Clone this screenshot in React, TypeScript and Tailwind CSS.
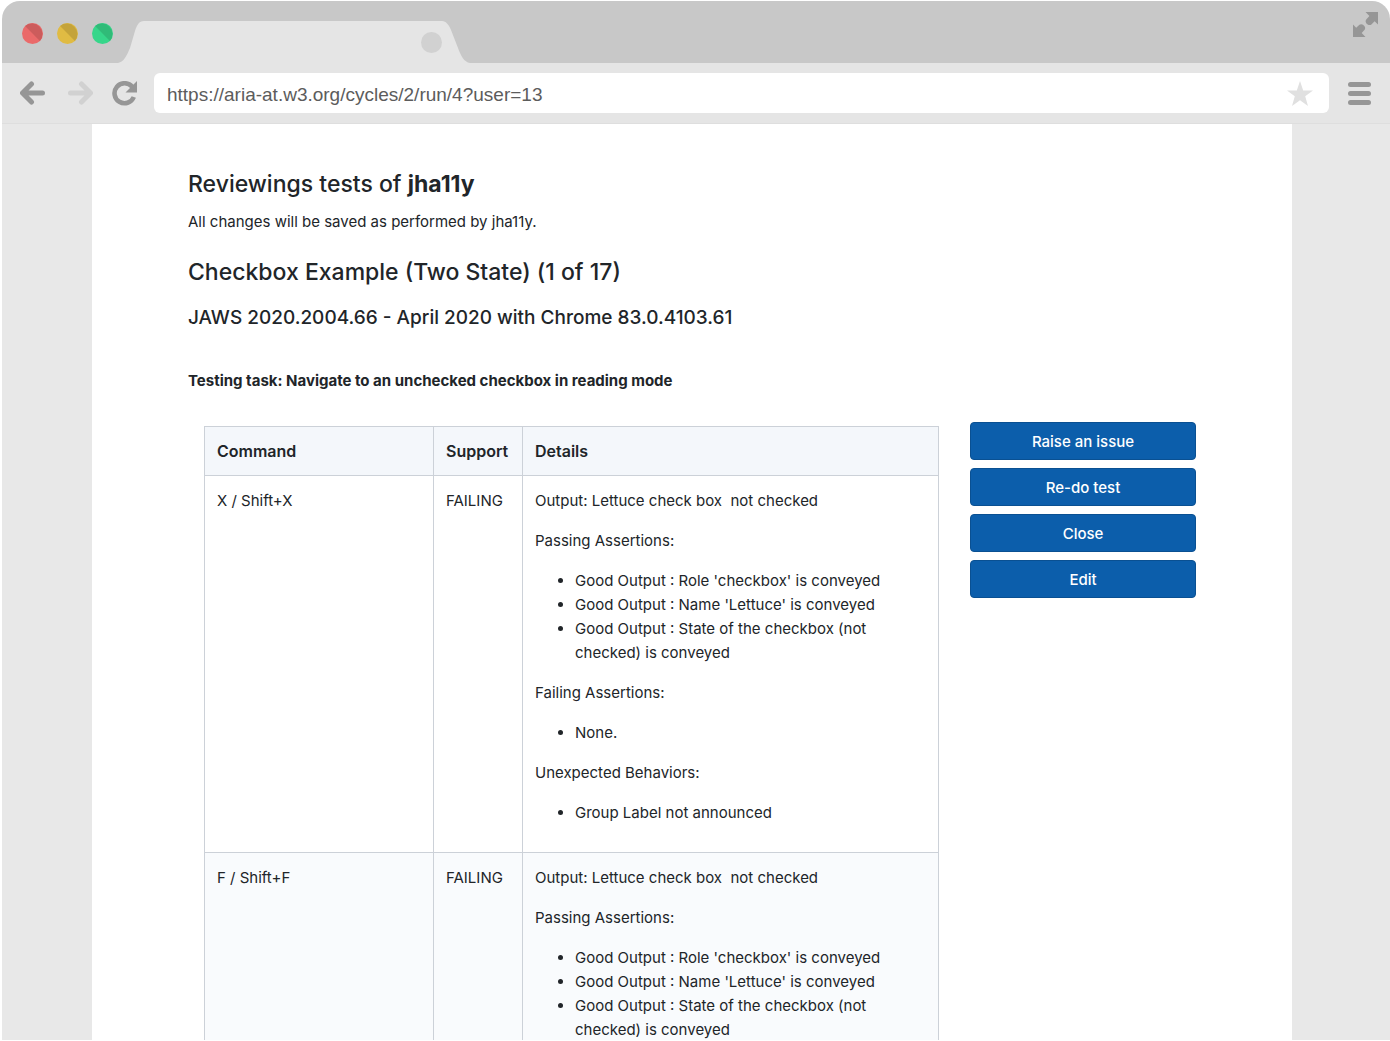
import React from "react";

const results = [
  { command: "X / Shift+X", support: "FAILING" },
  { command: "F / Shift+F", support: "FAILING" },
];

const passing = [
  "Good Output : Role 'checkbox' is conveyed",
  "Good Output : Name 'Lettuce' is conveyed",
  "Good Output : State of the checkbox (not checked) is conveyed",
];

const actions = ["Raise an issue", "Re-do test", "Close", "Edit"];

const lights = [
  { label: "Close window", base: "#ea6a6a", shade: "#cc5c5c" },
  { label: "Minimize window", base: "#e0bb43", shade: "#c4a33a" },
  { label: "Maximize window", base: "#36d68a", shade: "#30bb78" },
];

function TrafficLight({ label, base, shade }: { label: string; base: string; shade: string }) {
  return (
    <button type="button" aria-label={label} className="block size-[21px]">
      <svg viewBox="0 0 21 21" className="size-full">
        <circle cx="10.5" cy="10.5" r="10.5" fill={base} />
        <path d="M3.1 3.1A10.5 10.5 0 0 1 17.9 17.9Z" fill={shade} />
      </svg>
    </button>
  );
}

function TitleBar() {
  return (
    <div className="flex h-[62px] items-start rounded-t-[18px] bg-[#c8c8c8]">
      <div className="flex gap-[14px] pt-[22px] pl-5">
        {lights.map((l) => (
          <TrafficLight key={l.label} {...l} />
        ))}
      </div>
      <div className="ml-[5px] flex h-[62px] items-end">
        <svg viewBox="0 0 28 42" className="h-[42px] w-7 fill-[#e5e5e5]">
          <path d="M0 42C6 41 9 34 12 27L17 10C19 4 21 0 26 0H28V42Z" />
        </svg>
        <div className="flex h-[42px] w-[296px] items-center justify-end bg-[#e5e5e5]">
          <button type="button" aria-label="Close tab" className="size-[21px] rounded-full bg-[#d1d1d1]" />
        </div>
        <svg viewBox="0 0 28 42" className="h-[42px] w-7 fill-[#e5e5e5]">
          <path d="M0 0C4 0 7 4 9 9L16 27C19 35 22 41 28 42H0Z" />
        </svg>
      </div>
      <button type="button" aria-label="Full screen" className="mt-[11px] mr-3 ml-auto">
        <svg viewBox="0 0 25 25" className="size-[25px] fill-[#969696]">
          <path d="M12.5 0H25V12.5L21.6 9.3L18.4 12.4C15.6 14.6 11 10.4 13.2 7.4L16.4 4Z" />
          <path d="M0 12.5L3.2 15.8L6.4 12.8C9.2 10.6 13.8 14.8 11.6 17.8L8.7 20.9L12.5 25H0Z" />
        </svg>
      </button>
    </div>
  );
}

function Toolbar() {
  return (
    <div className="flex h-[61px] items-center border-b border-[#dedede] bg-[#e5e5e5] pr-[19px] pl-[18px]">
      <button type="button" aria-label="Back">
        <svg viewBox="0 0 25 24" className="h-6 w-[25px] fill-none stroke-[#969696] stroke-5 [stroke-linecap:round] [stroke-linejoin:round]">
          <path d="M11.5 3L2.5 12L11.5 21M3 12H22.5" />
        </svg>
      </button>
      <button type="button" aria-label="Forward" className="ml-[23px]">
        <svg viewBox="0 0 25 24" className="h-6 w-[25px] fill-none stroke-[#d1d1d1] stroke-5 [stroke-linecap:round] [stroke-linejoin:round]">
          <path d="M13.5 3L22.5 12L13.5 21M22 12H2.5" />
        </svg>
      </button>
      <button type="button" aria-label="Reload" className="ml-[19px]">
        <svg viewBox="0 0 25 25" className="size-[25px]">
          <path d="M20.2 5.8A10 10 0 1 0 21.8 16" fill="none" stroke="#969696" strokeWidth="4.6" />
          <path d="M25 0V11.5H13.5Z" fill="#969696" />
        </svg>
      </button>
      <div className="mr-[19px] ml-[17px] flex h-10 flex-1 items-center rounded-md bg-white pr-4 pl-[13px]">
        <input
          aria-label="Address"
          type="text"
          defaultValue="https://aria-at.w3.org/cycles/2/run/4?user=13"
          className="min-w-0 flex-1 pt-[3px] font-['Liberation_Sans',sans-serif] text-[19px] leading-7 text-[#5c5c5c] outline-none"
        />
        <button type="button" aria-label="Bookmark this page">
          <svg viewBox="0 0 26 25" className="h-[25px] w-[26px] fill-[#e0e0e0]">
            <path d="M13 0L16.2 9.4H26L18.2 15.2L21 25L13 19.2L5 25L7.8 15.2L0 9.4H9.8Z" />
          </svg>
        </button>
      </div>
      <button type="button" aria-label="Menu" className="flex w-[23px] flex-col gap-1">
        <span className="h-[5px] rounded-full bg-[#969696]" />
        <span className="h-[5px] rounded-full bg-[#969696]" />
        <span className="h-[5px] rounded-full bg-[#969696]" />
      </button>
    </div>
  );
}

function Section({ title, items }: { title: string; items: string[] }) {
  return (
    <>
      <p className="mb-4">{title}</p>
      <ul className="mb-4 list-disc pl-10">
        {items.map((i) => (
          <li key={i}>{i}</li>
        ))}
      </ul>
    </>
  );
}

function ResultsTable() {
  return (
    <table className="w-full table-fixed border-collapse text-left align-top">
      <colgroup>
        <col className="w-[229px]" />
        <col className="w-[89px]" />
        <col />
      </colgroup>
      <thead>
        <tr className="bg-[#f4f7fb]">
          {["Command", "Support", "Details"].map((h) => (
            <th key={h} scope="col" className="border border-[#ccd1d8] px-3 py-3 text-base font-semibold">
              {h}
            </th>
          ))}
        </tr>
      </thead>
      <tbody>
        {results.map((r) => (
          <tr key={r.command} className="align-top even:bg-[#f9fbfd]">
            <td className="border border-[#ccd1d8] px-3 pt-[13px] pb-[11px]">{r.command}</td>
            <td className="border border-[#ccd1d8] px-3 pt-[13px] pb-[11px]">{r.support}</td>
            <td className="border border-[#ccd1d8] px-3 pt-[13px] pb-[11px]">
              <p className="mb-4">Output: Lettuce check box&nbsp; not checked</p>
              <Section title="Passing Assertions:" items={passing} />
              <Section title="Failing Assertions:" items={["None."]} />
              <Section title="Unexpected Behaviors:" items={["Group Label not announced"]} />
            </td>
          </tr>
        ))}
      </tbody>
    </table>
  );
}

export default function App() {
  return (
    <div className="h-screen bg-white pt-px pb-px pl-0.5">
      <div className="flex h-full flex-col overflow-hidden">
        <TitleBar />
        <Toolbar />
        <div className="min-h-0 flex-1 overflow-hidden bg-[#e8e8e8] pr-[98px] pl-[90px]">
          <main className="min-h-full bg-white px-24 pt-[46px] font-[Inter,sans-serif] text-[15px] leading-6 text-[#212529]">
            <h1 className="text-[23px] leading-7 font-medium">
              Reviewings tests of <strong className="font-bold">jha11y</strong>
            </h1>
            <p className="mt-3">All changes will be saved as performed by jha11y.</p>
            <h2 className="mt-6 text-[23px] leading-7 font-medium">Checkbox Example (Two State) (1 of 17)</h2>
            <h3 className="mt-5 text-[19px] leading-6 font-medium">
              JAWS 2020.2004.66 - April 2020 with Chrome 83.0.4103.61
            </h3>
            <h4 className="mt-[39px] font-bold">
              Testing task: Navigate to an unchecked checkbox in reading mode
            </h4>
            <div className="mt-[29px] flex items-start gap-[31px]">
              <div className="min-w-0 flex-1 pt-1 pl-4">
                <ResultsTable />
              </div>
              <div className="flex w-[226px] flex-col gap-2">
                {actions.map((a) => (
                  <button
                    key={a}
                    type="button"
                    className="h-[38px] rounded-[4px] border border-[#0a5092] bg-[#0c5eab] pt-0.5 font-medium text-white"
                  >
                    {a}
                  </button>
                ))}
              </div>
            </div>
          </main>
        </div>
      </div>
    </div>
  );
}
